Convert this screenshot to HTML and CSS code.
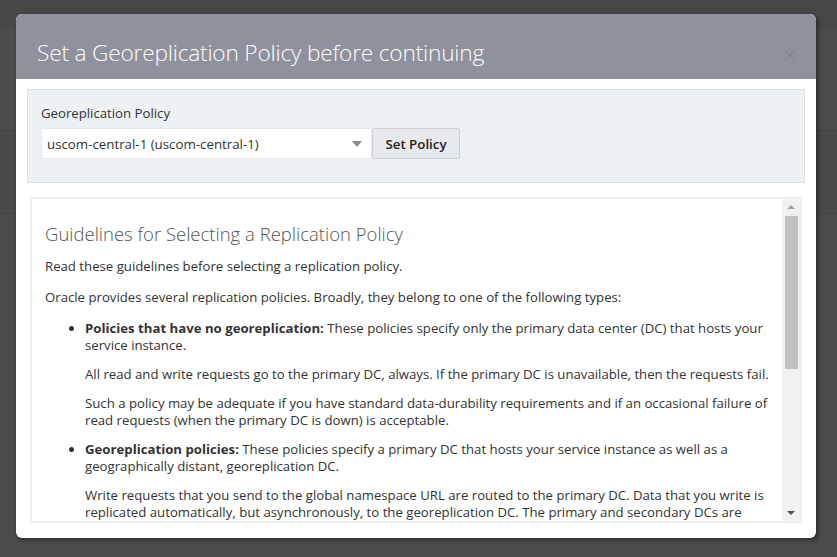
FILE: index.html
```html
<!DOCTYPE html>
<html>
<head>
<meta charset="utf-8">
<link rel="stylesheet" href="styles.css">
</head>
<body>
<div class="backdrop">
  <div class="bd-top"></div>
  <div class="bd-band"></div>
  <div class="bd-band2"></div>
</div>
<div class="modal">
  <div class="modal-header">
    <h1 class="modal-title">Set a Georeplication Policy before continuing</h1>
    <span class="close">×</span>
  </div>
  <div class="modal-body">
    <div class="policy-panel">
      <label class="policy-label">Georeplication Policy</label>
      <div class="policy-row">
        <div class="select">
          <span>uscom-central-1 (uscom-central-1)</span>
          <span class="caret"></span>
        </div>
        <button class="btn">Set Policy</button>
      </div>
    </div>
    <div class="guide-box">
      <div class="guide-content">
        <h2 class="guide-title">Guidelines for Selecting a Replication Policy</h2>
        <p class="p-outer">Read these guidelines before selecting a replication policy.</p>
        <p class="p-outer">Oracle provides several replication policies. Broadly, they belong to one of the following types:</p>
        <ul class="guide-list">
          <li>
            <p><b>Policies that have no georeplication:</b> These policies specify only the primary data center (DC) that hosts your service instance.</p>
            <p>All read and write requests go to the primary DC, always. If the primary DC is unavailable, then the requests fail.</p>
            <p>Such a policy may be adequate if you have standard data-durability requirements and if an occasional failure of read requests (when the primary DC is down) is acceptable.</p>
          </li>
          <li>
            <p><b>Georeplication policies:</b> These policies specify a primary DC that hosts your service instance as well as a geographically distant, georeplication DC.</p>
            <p>Write requests that you send to the global namespace URL are routed to the primary DC. Data that you write is replicated automatically, but asynchronously, to the georeplication DC. The primary and secondary DCs are configured so that the data is kept in sync.</p>
          </li>
        </ul>
      </div>
      <div class="scrollbar">
        <span class="arrow-up"></span>
        <div class="thumb"></div>
        <div class="track-fill"></div>
        <span class="arrow-down"></span>
      </div>
    </div>
  </div>
</div>
</body>
</html>
```
FILE: styles.css
```css
* { box-sizing: border-box; }
html, body { margin: 0; padding: 0; }
body {
  width: 837px;
  height: 557px;
  overflow: hidden;
  background: #4b4b4b;
  font-family: "Open Sans", "Noto Sans", sans-serif;
  color: #333;
  position: relative;
}
.bd-top { height: 27px; background: #474747; }
.bd-band { height: 104px; background: #4c4c4c; border-bottom: 1px solid #444; }
.bd-band2 { height: 83px; background: #4a4a4a; border-bottom: 1px solid #444; }

.modal {
  position: absolute;
  left: 16px;
  top: 14px;
  width: 800px;
  height: 524px;
  background: #fff;
  border-radius: 6px;
  box-shadow: 2px 2px 4px rgba(0,0,0,0.45);
  overflow: hidden;
  display: flex;
  flex-direction: column;
}
.modal-header {
  height: 65px;
  background: #8f919c;
  display: flex;
  align-items: center;
  justify-content: space-between;
  padding: 0 20px 0 21px;
}
.modal-title {
  margin: 0;
  font-weight: 300;
  font-size: 22.7px;
  color: #fff;
  letter-spacing: -0.2px;
  padding-top: 12px;
}
.close {
  color: #80828c;
  font-size: 22px;
  padding-top: 14px;
  font-weight: 300;
}
.modal-body {
  flex: 1;
  padding: 10px 11px 15px;
  display: flex;
  flex-direction: column;
  min-height: 0;
}
.policy-panel {
  height: 94px;
  background: #eef1f4;
  border: 1px solid #d8dde3;
  padding: 14px 13px 0;
}
.policy-label {
  display: block;
  font-size: 13.2px;
  line-height: 18px;
  color: #333;
  margin-bottom: 6px;
}
.policy-row { display: flex; }
.select {
  width: 331px;
  height: 31px;
  background: #fff;
  border: 1px solid #e6e9ed;
  display: flex;
  align-items: center;
  justify-content: space-between;
  padding: 1px 9px 0 5px;
  font-size: 13.3px;
  color: #333;
}
.caret {
  width: 0; height: 0;
  border-left: 5px solid transparent;
  border-right: 5px solid transparent;
  border-top: 6px solid #8a8a8a;
}
.btn {
  width: 88px;
  height: 31px;
  background: #e7e9ec;
  border: 1px solid #ccd0d6;
  border-radius: 2px;
  font-family: inherit;
  font-size: 13.3px;
  font-weight: 600;
  color: #222;
  padding: 0;
}
.guide-box {
  margin: 14px 3px 0;
  flex: 1;
  min-height: 0;
  border: 2px solid #eeeeee;
  display: flex;
  overflow: hidden;
}
.guide-content {
  flex: 1;
  overflow: hidden;
  padding: 23px 4px 0 13px;
  font-size: 13.2px;
  line-height: 17px;
}
.guide-title {
  margin: 0 0 12px;
  font-size: 18.5px;
  font-weight: 300;
  line-height: 24px;
  color: #555;
}
.p-outer { margin: 0 0 14px; }
.guide-list {
  margin: 0;
  padding-left: 40px;
}
.guide-list li { margin-bottom: 12px; }
.guide-list p { margin: 0 0 12px; }
.guide-list b { font-weight: 700; color: #333; }
.scrollbar {
  width: 18px;
  background: #f1f1f1;
  display: flex;
  flex-direction: column;
  align-items: center;
}
.arrow-up {
  margin-top: 6px;
  width: 0; height: 0;
  border-left: 4px solid transparent;
  border-right: 4px solid transparent;
  border-bottom: 4px solid #a3a3a3;
}
.thumb {
  margin-top: 7px;
  width: 13px;
  height: 153px;
  background: #c1c1c1;
}
.track-fill { flex: 1; }
.arrow-down {
  margin-bottom: 6px;
  width: 0; height: 0;
  border-left: 4px solid transparent;
  border-right: 4px solid transparent;
  border-top: 4px solid #505050;
}
```
